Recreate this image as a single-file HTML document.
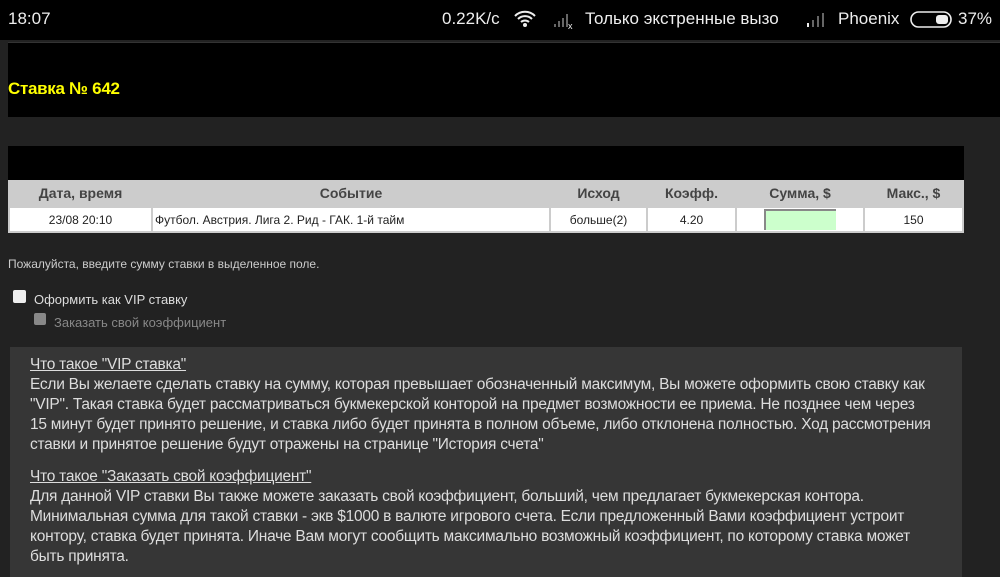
<!DOCTYPE html>
<html><head><meta charset="utf-8"><style>
*{margin:0;padding:0;box-sizing:border-box}
body{width:1000px;height:563px;overflow:hidden;background:#222;font-family:"Liberation Sans",sans-serif;color:#ddd;position:relative}
.a{position:absolute;white-space:nowrap}
.sb{position:absolute;left:0;top:0;width:1000px;height:40px;background:#000;color:#eee;font-size:17px}
.hdr{position:absolute;left:8px;top:42px;width:992px;height:75px;background:#000;border-top:1px solid #333}
.blk{position:absolute;left:8px;top:146px;width:956px;height:34px;background:#000}
table{position:absolute;left:8px;top:180px;width:956px;border-collapse:collapse;background:#ccc;font-size:12px;color:#222}
th{height:27px;font-size:14px;font-weight:bold;color:#444}
td{height:25px;background:#fff;border:2px solid #ccc;text-align:center}
.box{position:absolute;left:10px;top:347px;width:952px;height:230px;background:#363636}
.t{position:absolute;left:30px;font-size:15.5px;white-space:nowrap;color:#ddd;letter-spacing:-0.25px}
u{color:#ddd}
</style></head><body>
<div class="sb">
<span class="a" style="left:8px;top:9px">18:07</span>
<span class="a" style="left:442px;top:9px">0.22K/c</span>
<svg class="a" style="left:514px;top:10px" width="22" height="18" viewBox="0 0 22 18"><path d="M1 6a14 14 0 0 1 20 0M4 9a10 10 0 0 1 14 0M7 12a6 6 0 0 1 8 0" stroke="#eee" stroke-width="2" fill="none"/><circle cx="11" cy="15" r="2" fill="#eee"/></svg>
<svg class="a" style="left:552px;top:12px" width="24" height="18"><rect x="2" y="12" width="2" height="3" fill="#666"/><rect x="6" y="9" width="2" height="6" fill="#666"/><rect x="10" y="6" width="2" height="9" fill="#666"/><rect x="14" y="2" width="2" height="13" fill="#666"/><text x="16" y="17" font-size="9" fill="#eee">x</text></svg>
<span class="a" style="left:585px;top:9px">Только экстренные вызо</span>
<svg class="a" style="left:805px;top:12px" width="24" height="16"><rect x="2" y="11" width="2" height="4" fill="#eee"/><rect x="7" y="8" width="2" height="7" fill="#666"/><rect x="12" y="4" width="2" height="11" fill="#666"/><rect x="17" y="1" width="2" height="14" fill="#666"/></svg>
<span class="a" style="left:838px;top:9px">Phoenix</span>
<svg class="a" style="left:910px;top:11px" width="44" height="18"><rect x="1" y="1" width="40" height="15" rx="7.5" stroke="#eee" stroke-width="1.6" fill="none"/><rect x="26" y="4" width="12" height="9" rx="3" fill="#eee"/></svg>
<span class="a" style="left:958px;top:9px">37%</span>
</div>
<div class="hdr"><span class="a" style="left:0;top:36px;color:#ff0;font-weight:bold;font-size:17px;letter-spacing:-0.3px">Ставка № 642</span></div>
<div class="blk"></div>
<table>
<tr><th style="width:143px">Дата, время</th><th>Событие</th><th style="width:97px">Исход</th><th style="width:89px">Коэфф.</th><th style="width:128px">Сумма, $</th><th style="width:99px">Макс., $</th></tr>
<tr><td>23/08 20:10</td><td style="text-align:left;padding-left:2px">Футбол. Австрия. Лига 2. Рид - ГАК. 1-й тайм</td><td>больше(2)</td><td>4.20</td><td><div style="margin:0 auto;width:72px;height:21px;background:#cfc;border-top:2px solid #888;border-left:2px solid #888"></div></td><td>150</td></tr>
</table>
<span class="a" style="left:8px;top:257px;font-size:12px;color:#ccc">Пожалуйста, введите сумму ставки в выделенное поле.</span>
<div class="a" style="left:13px;top:290px;width:13px;height:13px;background:#eee;border-radius:2px"></div>
<span class="a" style="left:34px;top:292px;font-size:13px;color:#ddd">Оформить как VIP ставку</span>
<div class="a" style="left:34px;top:313px;width:12px;height:12px;background:#888;border-radius:2px"></div>
<span class="a" style="left:54px;top:315px;font-size:13px;color:#888">Заказать свой коэффициент</span>
<div class="box"></div>
<div class="t" style="top:356px"><u>Что такое "VIP ставка"</u></div>
<div class="t" style="top:376px">Если Вы желаете сделать ставку на сумму, которая превышает обозначенный максимум, Вы можете оформить свою ставку как</div>
<div class="t" style="top:396px">"VIP". Такая ставка будет рассматриваться букмекерской конторой на предмет возможности ее приема. Не позднее чем через</div>
<div class="t" style="top:416px">15 минут будет принято решение, и ставка либо будет принята в полном объеме, либо отклонена полностью. Ход рассмотрения</div>
<div class="t" style="top:436px">ставки и принятое решение будут отражены на странице "История счета"</div>
<div class="t" style="top:468px"><u>Что такое "Заказать свой коэффициент"</u></div>
<div class="t" style="top:488px">Для данной VIP ставки Вы также можете заказать свой коэффициент, больший, чем предлагает букмекерская контора.</div>
<div class="t" style="top:508px">Минимальная сумма для такой ставки - экв $1000 в валюте игрового счета. Если предложенный Вами коэффициент устроит</div>
<div class="t" style="top:528px">контору, ставка будет принята. Иначе Вам могут сообщить максимально возможный коэффициент, по которому ставка может</div>
<div class="t" style="top:548px">быть принята.</div>
</body></html>
